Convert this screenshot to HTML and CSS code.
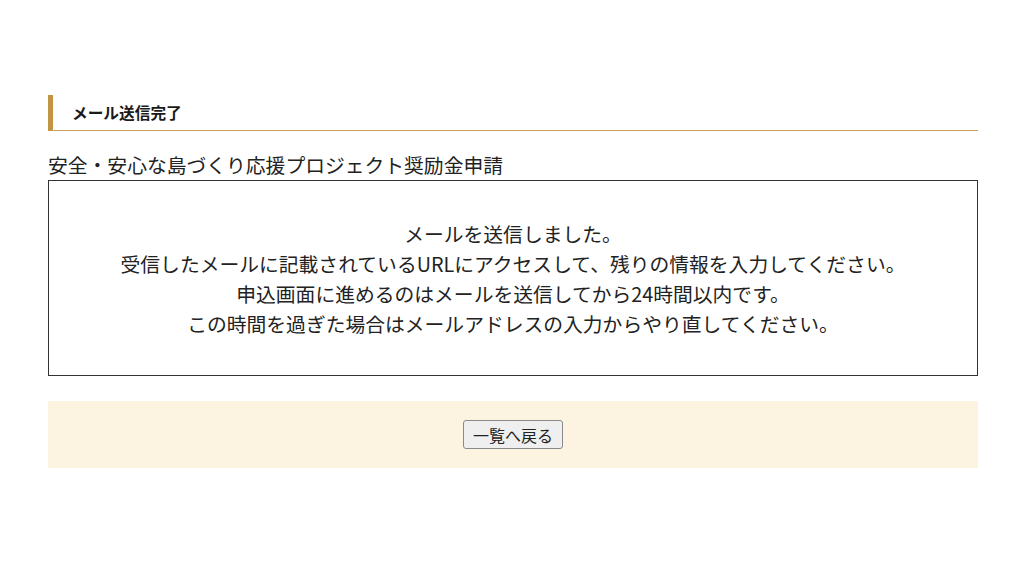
FILE: index.html
```html
<!DOCTYPE html>
<html lang="ja">
<head>
  <meta charset="UTF-8">
  <title>メール送信完了</title>
  <link rel="stylesheet" href="styles.css">
</head>
<body>

<div class="contenido">
  <h2 class="titulo">メール送信完了</h2>

  <p class="proyecto">安全・安心な島づくり応援プロジェクト奨励金申請</p>

  <div class="mensaje">
    メールを送信しました。<br>
    受信したメールに記載されているURLにアクセスして、残りの情報を入力してください。<br>
    申込画面に進めるのはメールを送信してから24時間以内です。<br>
    この時間を過ぎた場合はメールアドレスの入力からやり直してください。
  </div>

  <div class="acciones">
    <button type="button">一覧へ戻る</button>
  </div>
</div>

</body>
</html>
```

FILE: styles.css
```css
body {
  margin: 0;
  font-family: "Noto Sans CJK JP", "Noto Sans", sans-serif;
  color: #222;
  background: #fff;
}
.contenido {
  width: 930px;
  margin: 0 0 0 48px;
  padding-top: 95px;
}
.titulo {
  margin: 0;
  height: 35px;
  line-height: 35px;
  padding-left: 19px;
  font-size: 15.7px;
  font-weight: bold;
  color: #1a1a1a;
  border-left: 5px solid #c19543;
  border-bottom: 1px solid #c9a05a;
}
.proyecto {
  margin: 19px 0 0;
  font-size: 19.8px;
  line-height: 30px;
}
.mensaje {
  border: 1px solid #333;
  padding: 38px 0 36px;
  text-align: center;
  font-size: 19.8px;
  line-height: 30px;
}
.acciones {
  margin-top: 25px;
  background: #fcf3e0;
  padding: 19px 0;
  text-align: center;
  line-height: 0;
}
.acciones button {
  font-family: "Noto Sans CJK JP", sans-serif;
  font-size: 16px;
  line-height: normal;
  height: 29px;
  padding: 0 9px;
  color: #222;
  background: #efefef;
  border: 1px solid #8a8a8a;
  border-radius: 3px;
}
```
